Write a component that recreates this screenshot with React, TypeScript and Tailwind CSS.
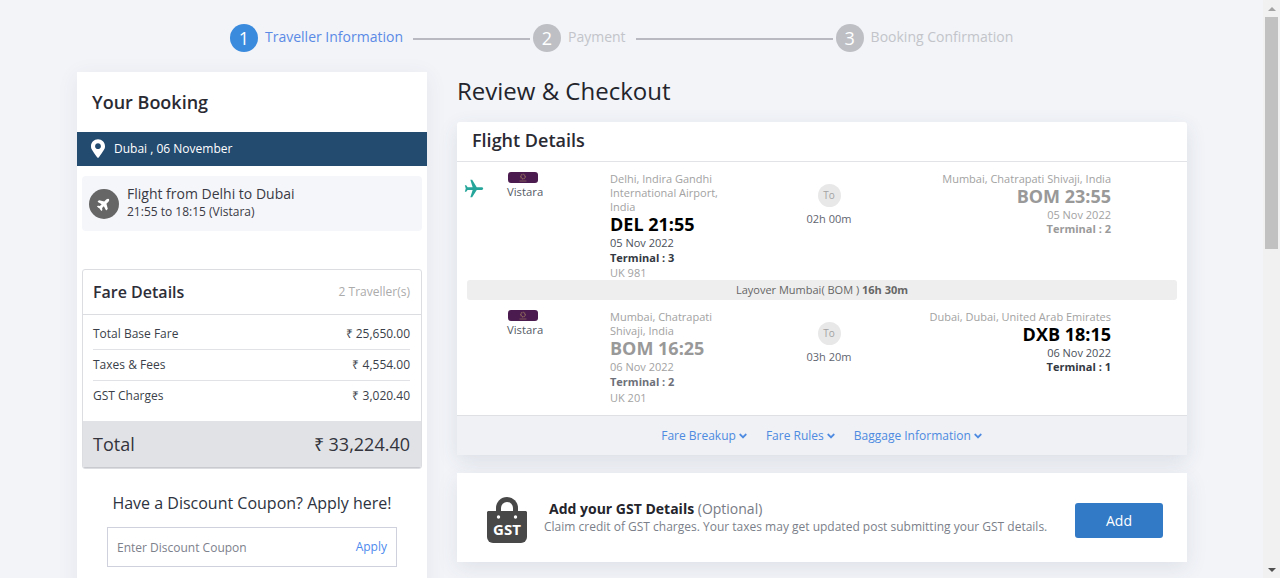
import { FaPlane, FaMapMarkerAlt, FaAngleDown } from "react-icons/fa"
import { MdFlight } from "react-icons/md"

function Step({ n, label, active }: { n: number; label: string; active?: boolean }) {
    return (
        <div className="flex items-center">
            <div className={`w-7 h-7 rounded-full flex items-center justify-center text-white text-[18px] leading-none ${active ? "bg-[#3a8ade]" : "bg-[#bebfc5]"}`}>
                {n}
            </div>
            <span className={`ml-[7px] text-[14px] leading-[20px] -mt-[2px] ${active ? "text-[#5b8ae6]" : "text-[#c3c4ca]"}`}>{label}</span>
        </div>
    )
}

function VistaraLogo() {
    return (
        <div className="w-[30px] h-[11px] ml-[1px] rounded-[3px] bg-[#4b1a4e] flex items-center justify-center">
            <svg width="12" height="10" viewBox="0 0 12 10">
                <circle cx="6" cy="3.6" r="2.2" fill="none" stroke="#8d6a5c" strokeWidth="1.4" strokeDasharray="1 0.5" />
                <rect x="2.5" y="7.6" width="7" height="0.8" fill="#8d6a5c" />
            </svg>
        </div>
    )
}

function Airline() {
    return (
        <div className="w-[103px] shrink-0 flex flex-col items-start">
            <VistaraLogo />
            <span className="text-[11.3px] leading-[16px] text-[#555b66] mt-[1px] whitespace-nowrap">Vistara</span>
        </div>
    )
}

function Duration({ time }: { time: string }) {
    return (
        <div className="w-[178px] shrink-0 flex flex-col items-center pt-[12px]">
            <div className="w-[23px] h-[23px] rounded-full bg-[#e8e8e8] flex items-center justify-center text-[10px] text-[#a3a3a3]">To</div>
            <span className="text-[11px] leading-[14px] text-[#5f6570] mt-[5px]">{time}</span>
        </div>
    )
}

interface EndpointProps {
    place: string[]
    code: string
    date: string
    terminal: string
    flight?: string
    dim?: boolean
    right?: boolean
}

function Endpoint({ place, code, date, terminal, flight, dim, right }: EndpointProps) {
    return (
        <div className={right ? "w-[193px] shrink-0 text-right" : "w-[130px] shrink-0"}>
            {place.map((p) => (
                <div key={p} className="text-[11px] leading-[14px] text-[#a2a2a2] whitespace-nowrap">{p}</div>
            ))}
            <div className={`text-[18px] leading-[22px] -mt-[1px] mb-[1px] font-bold whitespace-nowrap ${dim ? "text-[#999999]" : "text-black"}`}>{code}</div>
            <div className={`text-[11px] leading-[14px] ${dim ? "text-[#a2a2a2]" : "text-[#4a4f59]"}`}>{date}</div>
            <div className={`text-[11px] font-bold ${right ? "leading-[14px]" : "leading-[15px]"} ${dim ? (right ? "text-[#9a9a9a]" : "text-[#6d7079]") : "text-[#333842]"}`}>{terminal}</div>
            {flight && <div className={`text-[11px] text-[#a2a2a2] ${dim ? "leading-[17px]" : "leading-[15px]"}`}>{flight}</div>}
        </div>
    )
}

function FareRow({ label, value, last }: { label: string; value: string; last?: boolean }) {
    return (
        <div className={`flex justify-between items-center text-[12px] text-[#3a3f4a] ${last ? "h-[30px]" : "h-[31px] border-b border-[#e1e2e6]"}`}>
            <span>{label}</span>
            <span>{value}</span>
        </div>
    )
}

function FooterLink({ label }: { label: string }) {
    return (
        <span className="flex items-center text-[12px] text-[#4d8ae0]">
            {label}
            <FaAngleDown className="w-[10px] h-[12px] ml-[2px]" />
        </span>
    )
}

function GstIcon() {
    return (
        <svg width="40" height="46" viewBox="0 0 40 46" className="shrink-0 mt-[4px]">
            <path d="M9 15 V11 a11 11 0 0 1 22 0 V15 Z" fill="#484848" />
            <path d="M14 15 V11 a6 6 0 0 1 12 0 V15 Z" fill="#ffffff" />
            <path d="M1 14 H39 L40 15 V40 a6 6 0 0 1 -6 6 H6 a6 6 0 0 1 -6 -6 V15 Z" fill="#484848" />
            <circle cx="11.5" cy="20" r="1.7" fill="#ffffff" />
            <circle cx="28.5" cy="20" r="1.7" fill="#ffffff" />
            <text x="20" y="37.5" textAnchor="middle" fontSize="15" fontWeight="700" fill="#ffffff" fontFamily="'Open Sans', sans-serif">GST</text>
        </svg>
    )
}

export default function App() {
    return (
        <div className="h-[578px] overflow-hidden flex bg-[#f2f4f8] font-['Open_Sans',sans-serif]">
            <div className="flex-1 min-w-0">
                {/* Stepper */}
                <div className="h-[72px] pl-[230px] pt-[24px] flex items-start">
                    <Step n={1} label="Traveller Information" active />
                    <div className="w-[117px] h-[2px] bg-[#b9bac1] ml-[10px] mr-[3px] mt-[14px]" />
                    <Step n={2} label="Payment" />
                    <div className="w-[197px] h-[2px] bg-[#b9bac1] ml-[10px] mr-[3px] mt-[14px]" />
                    <Step n={3} label="Booking Confirmation" />
                </div>

                <div className="flex items-start pl-[77px]">
                    {/* Your booking */}
                    <div className="w-[350px] h-[520px] shrink-0 bg-white shadow-[0_4px_20px_rgba(60,70,100,0.08)]">
                        <h2 className="h-[60px] pl-[15px] flex items-center text-[18px] font-semibold text-[#2a2a33]">Your Booking</h2>
                        <div className="h-[34px] bg-[#234a6f] flex items-center pl-[14px] text-white">
                            <FaMapMarkerAlt className="w-[14px] h-[19px] -mt-[2px]" />
                            <span className="ml-[9px] text-[12px] font-medium">Dubai , 06 November</span>
                        </div>
                        <div className="mx-[5px] mt-[10px] h-[55px] rounded-[4px] bg-[#f5f6fa] flex items-center pl-[7px]">
                            <div className="w-[30px] h-[30px] rounded-full bg-[#666666] flex items-center justify-center">
                                <FaPlane className="w-[14px] h-[14px] text-white -rotate-45" />
                            </div>
                            <div className="ml-[8px] -mt-[3px]">
                                <div className="text-[14px] leading-[18px] text-[#3a3a44]">Flight from Delhi to Dubai</div>
                                <div className="text-[12px] leading-[16px] mt-[1px] text-[#3a3a44]">21:55 to 18:15 (Vistara)</div>
                            </div>
                        </div>

                        <div className="mx-[5px] mt-[38px] border border-[#dcdde1] rounded-[3px] overflow-hidden">
                            <div className="h-[45px] pl-[10px] pr-[11px] flex items-center justify-between border-b border-[#dcdde1]">
                                <span className="text-[16px] font-semibold text-[#2e2e38]">Fare Details</span>
                                <span className="text-[12px] text-[#ababab]">2 Traveller(s)</span>
                            </div>
                            <div className="pl-[10px] pr-[11px] pt-[4px] pb-[10px]">
                                <FareRow label="Total Base Fare" value="₹ 25,650.00" />
                                <FareRow label="Taxes & Fees" value="₹ 4,554.00" />
                                <FareRow label="GST Charges" value="₹ 3,020.40" last />
                            </div>
                            <div className="h-[47px] bg-[#e1e2e6] border-b border-[#c9cacf] pl-[10px] pr-[11px] flex items-center justify-between text-[#33343c]">
                                <span className="text-[18px]">Total</span>
                                <span className="text-[18px]">₹ 33,224.40</span>
                            </div>
                        </div>

                        <div className="mt-[23px] text-center text-[16px] leading-[22px] text-[#2d3340]">Have a Discount Coupon? Apply here!</div>
                        <div className="mx-[30px] mt-[13px] h-[40px] border border-[#cfd2dc] flex items-center justify-between px-[9px] text-[12px]">
                            <span className="text-[#7d818c] mt-[1px]">Enter Discount Coupon</span>
                            <span className="text-[#4d8aee]">Apply</span>
                        </div>
                    </div>

                    {/* Review and checkout */}
                    <div className="w-[730px] ml-[30px] shrink-0">
                        <h1 className="h-[50px] flex items-end pb-[15px] text-[24px] leading-[32px] text-[#24242c]">Review &amp; Checkout</h1>

                        <div className="rounded-t-[3px] bg-white shadow-[0_6px_20px_rgba(60,70,100,0.12)]">
                            <h3 className="h-[40px] pl-[15px] pb-[2px] flex items-center text-[18px] font-semibold text-[#2a2a33] border-b border-[#e2e3e6]">Flight Details</h3>

                            <div className="flex pl-[8px] pt-[10px]">
                                <div className="w-[42px] shrink-0 pt-[6px] -ml-[2px] mr-[2px]">
                                    <MdFlight className="w-[22px] h-[22px] text-[#26a69a] rotate-90" />
                                </div>
                                <Airline />
                                <Endpoint place={["Delhi, Indira Gandhi", "International Airport,", "India"]} code="DEL 21:55" date="05 Nov 2022" terminal="Terminal : 3" flight="UK 981" />
                                <Duration time="02h 00m" />
                                <Endpoint right dim place={["Mumbai, Chatrapati Shivaji, India"]} code="BOM 23:55" date="05 Nov 2022" terminal="Terminal : 2" />
                            </div>

                            <div className="mx-[10px] h-[20px] rounded-[3px] bg-[#eeeeee] flex items-center justify-center text-[11px] text-[#666666]">
                                <span>Layover Mumbai( BOM ) <b className="font-bold">16h 30m</b></span>
                            </div>

                            <div className="flex pl-[8px] pt-[10px] pb-[9px] border-b border-[#dfe0e3]">
                                <div className="w-[42px] shrink-0" />
                                <Airline />
                                <Endpoint dim place={["Mumbai, Chatrapati", "Shivaji, India"]} code="BOM 16:25" date="06 Nov 2022" terminal="Terminal : 2" flight="UK 201" />
                                <Duration time="03h 20m" />
                                <Endpoint right place={["Dubai, Dubai, United Arab Emirates"]} code="DXB 18:15" date="06 Nov 2022" terminal="Terminal : 1" />
                            </div>

                            <div className="h-[39px] bg-[#eff1f5] flex items-center justify-center gap-[18px]">
                                <FooterLink label="Fare Breakup" />
                                <FooterLink label="Fare Rules" />
                                <FooterLink label="Baggage Information" />
                            </div>
                        </div>

                        <div className="mt-[18px] h-[89px] bg-white shadow-[0_6px_20px_rgba(60,70,100,0.1)] flex items-center pl-[30px] pr-[24px]">
                            <GstIcon />
                            <div className="ml-[17px] flex-1 min-w-0 -mt-[2px]">
                                <div className="pl-[5px] text-[14px] leading-[20px] text-[#777b85]">
                                    <span className="font-bold text-[#24242c]">Add your GST Details</span> (Optional)
                                </div>
                                <div className="text-[12px] leading-[16px] text-[#7b7f8a] whitespace-nowrap">
                                    Claim credit of GST charges. Your taxes may get updated post submitting your GST details.
                                </div>
                            </div>
                            <button className="w-[88px] h-[35px] mt-[6px] rounded-[3px] bg-[#337ac6] text-white text-[14px]">Add</button>
                        </div>
                    </div>
                </div>
            </div>

            {/* Scrollbar */}
            <div className="w-[17px] shrink-0 bg-[#f1f1f1] flex flex-col items-center">
                <div className="h-[17px] flex items-center justify-center">
                    <div className="w-0 h-0 border-x-[4px] border-x-transparent border-b-[4px] border-b-[#a3a3a3]" />
                </div>
                <div className="w-[13px] h-[232px] bg-[#c1c1c1]" />
                <div className="flex-1" />
                <div className="h-[17px] flex items-center justify-center">
                    <div className="w-0 h-0 border-x-[4px] border-x-transparent border-t-[4px] border-t-[#505050]" />
                </div>
            </div>
        </div>
    )
}
